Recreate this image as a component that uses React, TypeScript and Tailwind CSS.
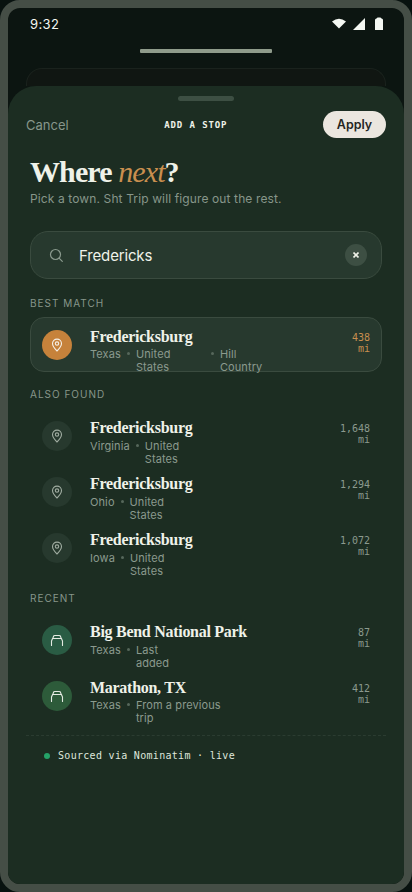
import React, { useState } from 'react';
import clsx from 'clsx';

type PlaceTone = 'best' | 'plain' | 'teal' | 'green';

interface Place {
  id: string;
  name: string;
  region: string;
  details: { text: string; width: string }[];
  distance: string;
  tone: PlaceTone;
  tight?: boolean;
}

const BEST_MATCH: Place[] = [
  {
    id: 'tx',
    name: 'Fredericksburg',
    region: 'Texas',
    details: [
      { text: 'United States', width: 'w-[69px]' },
      { text: 'Hill Country', width: 'w-[60px]' },
    ],
    distance: '438',
    tone: 'best',
    tight: true,
  },
];

const ALSO_FOUND: Place[] = [
  { id: 'va', name: 'Fredericksburg', region: 'Virginia', details: [{ text: 'United States', width: 'w-[60px]' }], distance: '1,648', tone: 'plain' },
  { id: 'oh', name: 'Fredericksburg', region: 'Ohio', details: [{ text: 'United States', width: 'w-[60px]' }], distance: '1,294', tone: 'plain' },
  { id: 'ia', name: 'Fredericksburg', region: 'Iowa', details: [{ text: 'United States', width: 'w-[60px]' }], distance: '1,072', tone: 'plain' },
];

const RECENT: Place[] = [
  { id: 'bb', name: 'Big Bend National Park', region: 'Texas', details: [{ text: 'Last added', width: 'w-[50px]' }], distance: '87', tone: 'teal' },
  { id: 'mt', name: 'Marathon, TX', region: 'Texas', details: [{ text: 'From a previous trip', width: 'w-[96px]' }], distance: '412', tone: 'green', tight: true },
];

const TONES: Record<PlaceTone, string> = {
  best: 'bg-[#c6823b] text-[#f5efe6]',
  plain: 'bg-[#27392e] text-[#a0aca1]',
  teal: 'bg-[#2a5c44] text-[#e4ebe2]',
  green: 'bg-[#2d5b3a] text-[#e4ebe2]',
};

function PinIcon() {
  return (
    <svg width="14" height="14" viewBox="0 0 14 14" fill="none" stroke="currentColor" strokeWidth="1.1" strokeLinejoin="round">
      <path d="M7 13C4.500 10.600 2.500 8.200 2.500 5.600a4.500 4.500 0 0 1 9 0C11.500 8.200 9.500 10.600 7 13z" />
      <circle cx="7" cy="5.600" r="1.700" />
    </svg>
  );
}

function CampIcon() {
  return (
    <svg width="14" height="14" viewBox="0 0 14 14" fill="none" stroke="currentColor" strokeWidth="1.1" strokeLinecap="round" strokeLinejoin="round">
      <path d="M1.500 12.500V8L2.600 5.500h8.800L12.500 8v4.500" />
      <path d="M2.800 5.500l.7-2.200Q3.800 2.500 4.800 2.500h4.400q1 0 1.300.8l.7 2.200" />
    </svg>
  );
}

function StatusBar() {
  return (
    <div className="flex h-8 items-center justify-between pl-[22px] pr-[20px]">
      <span className="text-[13px] leading-4 tracking-[0.4px] text-[#f4f7f2]">9:32</span>
      <svg width="52" height="14" viewBox="0 0 52 14" fill="#f4f7f2">
        <path d="M0 4.500Q7-1 14 4.500L7 11.500z" />
        <path d="M33 1v12H21z" />
        <path d="M44.500 1.500Q45 .5 46 .5h2q1 0 1.500 1 1.500.3 1.500 1.500v10h-8V3q0-1.200 1.500-1.500z" />
      </svg>
    </div>
  );
}

function SectionLabel({ children }: { children: React.ReactNode }) {
  return <h2 className="h-[35px] pt-[14px] text-[10px] font-normal leading-[14px] tracking-[1px] text-[#87968a]">{children}</h2>;
}

function PlaceRow({ place }: { place: Place }) {
  const best = place.tone === 'best';
  return (
    <li
      className={clsx(
        'flex items-start rounded-[14px] border px-[11px]',
        best ? 'mb-px h-[55px] border-[#3a4b3f] bg-[#27392e]' : 'h-14 border-transparent'
      )}
    >
      <span className={clsx('mt-[12px] flex size-[30px] shrink-0 items-center justify-center rounded-full', TONES[place.tone])}>
        {place.tone === 'best' || place.tone === 'plain' ? <PinIcon /> : <CampIcon />}
      </span>
      <div className="ml-[18px] min-w-0 flex-1 pt-[10px]">
        <h3 className="font-['Liberation_Serif',serif] text-[16px] font-bold leading-[18px] tracking-[-0.28px] text-[#eff2e9]">{place.name}</h3>
        <div className={clsx('flex gap-[6px] text-[11px] leading-[13px] tracking-[0.1px] text-[#8b9a8e]', place.tight ? 'pt-[2px]' : 'pt-[3px]')}>
          <span>{place.region}</span>
          {place.details.map(detail => (
            <React.Fragment key={detail.text}>
              <span className="mt-[4px] size-[3px] shrink-0 rounded-full bg-[#56675b]" />
              <span className={clsx('shrink-0', detail.width)}>{detail.text}</span>
            </React.Fragment>
          ))}
        </div>
      </div>
      <div
        className={clsx(
          "flex w-[34px] flex-col pt-[14px] text-right font-['DejaVu_Sans_Mono',monospace] text-[10px] leading-[11px]",
          best ? 'text-[#c98f4f]' : 'text-[#8b9a8e]'
        )}
      >
        <span>{place.distance}</span>
        <span>mi</span>
      </div>
    </li>
  );
}

function PlaceSection({ title, places }: { title: string; places: Place[] }) {
  return (
    <section>
      <SectionLabel>{title}</SectionLabel>
      <ul>
        {places.map(place => (
          <PlaceRow key={place.id} place={place} />
        ))}
      </ul>
    </section>
  );
}

export default function App() {
  const [query, setQuery] = useState('Fredericks');

  return (
    <div className="h-[892px] w-[412px] bg-[#08120f] font-['Inter',sans-serif]">
      <div className="flex h-full flex-col overflow-hidden rounded-[20px] border-8 border-[#454e46] bg-[#0c1511]">
        <StatusBar />
        <div className="mx-auto mt-[9px] h-1 w-[132px] shrink-0 rounded-[1px] bg-[#8f9b8b]" />
        {/* card of the screen underneath */}
        <div className="mx-[18px] mt-[15px] h-[18px] shrink-0 rounded-t-[16px] border border-b-0 border-[#1a221d] bg-[#101612]" />

        <div className="flex flex-1 flex-col rounded-t-[28px] bg-[#1c2d22]">
          <div className="mx-auto mt-[10px] h-[5px] w-14 rounded-full bg-[#3d4f43]" />

          <header className="mt-[9px] flex h-[28px] items-center px-[18px]">
            <button className="pt-[2px] text-left text-[13px] leading-4 text-[#87968a]">Cancel</button>
            <span className="flex-1 pt-[3px] text-center font-['DejaVu_Sans_Mono',monospace] text-[9px] font-bold tracking-[0.9px] text-[#eff2e9]">ADD A STOP</span>
            <button className="h-[27px] w-[63px] rounded-full bg-[#ebe6df] text-[12.500px] font-semibold leading-[27px] text-[#25261f]">Apply</button>
          </header>

          <main className="px-[22px]">
            <h1 className="mt-[17px] font-['Liberation_Serif',serif] text-[30px] font-bold leading-[34px] tracking-[-0.9px] text-[#eff2e9]">
              Where <em className="font-normal text-[#c98f4f]">next</em>?
            </h1>
            <p className="mt-[2px] text-[12px] leading-4 tracking-[0.12px] text-[#87968a]">Pick a town. Sht Trip will figure out the rest.</p>

            <div className="mt-[24px] flex h-12 items-center rounded-[18px] border border-[#3a4b3f] bg-[#27392e] pl-[18px] pr-[14px]">
              <svg width="15" height="15" viewBox="0 0 15 15" fill="none" stroke="#8b9a8e" strokeWidth="1.200" strokeLinecap="round">
                <circle cx="6.500" cy="6.500" r="5" />
                <path d="M10.300 10.300l3 3" />
              </svg>
              <input
                value={query}
                onChange={e => setQuery(e.target.value)}
                className="ml-[15px] min-w-0 flex-1 bg-transparent pt-[2px] text-[15px] tracking-[-0.15px] text-[#eff2e9] outline-none"
              />
              <button onClick={() => setQuery('')} className="flex size-[22px] items-center justify-center rounded-full bg-[#3d4f43]">
                <svg width="6" height="6" viewBox="0 0 6 6" stroke="#eff2e9" strokeWidth="1.600">
                  <path d="M.5.5l5 5M5.500.5l-5 5" />
                </svg>
              </button>
            </div>

            <div className="flex flex-col pt-[3px]">
              <PlaceSection title="BEST MATCH" places={BEST_MATCH} />
              <PlaceSection title="ALSO FOUND" places={ALSO_FOUND} />
              <div className="pt-px">
                <PlaceSection title="RECENT" places={RECENT} />
              </div>
            </div>
          </main>

          <footer className="mx-[18px] mt-[11px] flex items-center gap-2 border-t border-dashed border-[#2b3c31] pl-[18px] pt-[12px]">
            <span className="size-[6px] rounded-full bg-[#25a268]" />
            <span className="font-['DejaVu_Sans_Mono',monospace] text-[10px] leading-[15px] tracking-[0.3px] text-[#dfe6dc]">Sourced via Nominatim · live</span>
          </footer>
        </div>
      </div>
    </div>
  );
}
